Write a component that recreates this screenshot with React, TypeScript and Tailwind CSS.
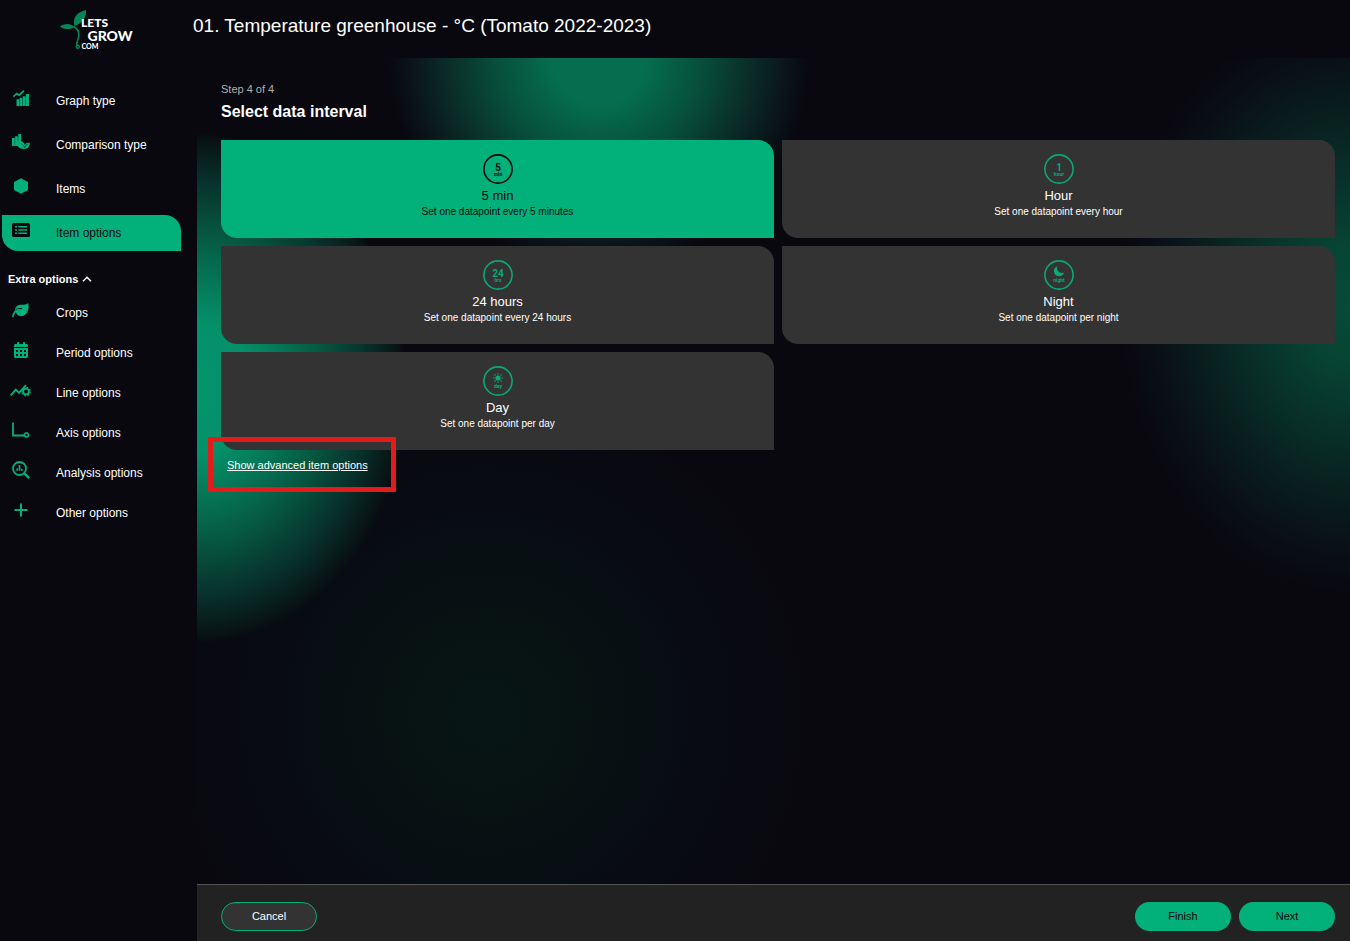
import type { ReactNode } from "react";
import { FaCalendarAlt } from "react-icons/fa";

type IconProps = { className?: string };

function GraphIcon() {
  return (
    <svg viewBox="0 0 16 16" className="h-4 w-4" fill="currentColor">
      <path d="M3.500 9.200h2.700V16H3.500zM6.600 7.700h2.700V16H6.600zM9.700 6.200h2.700V16H9.700zM12.800 4H16v12h-3.200z" />
      <path d="M.4 6.700 3.700 3.500l2.400 1.700L11 .7" fill="none" stroke="currentColor" strokeWidth="1.700" />
    </svg>
  );
}

function ComparisonIcon() {
  return (
    <svg viewBox="0 0 18 16" className="h-4 w-[18px]" fill="currentColor">
      <path d="M0 4h2.800v8H0zM3.100 2.200h2.700V12H3.100zM6.200 0H9v8H6.200z" />
      <path d="M4.200 7.200c4.300-.8 8 .2 8.600 3.600.7-1.800 2.200-2.400 5-2.100 0 3.700-1.800 6.200-5.600 6.200-4.400.3-7.800-2.700-8-7.700z" />
      <path d="M12.600 13.800c.4-1.800 1.200-2.800 2.800-3.500" fill="none" stroke="#09080f" strokeWidth=".7" />
      <path d="M9 9.800c1.600.8 2.600 1.800 3.300 3.200" fill="none" stroke="#09080f" strokeWidth=".4" />
    </svg>
  );
}

function HexagonIcon() {
  return (
    <svg viewBox="0 0 14 16" className="h-4 w-3.5" fill="currentColor">
      <path d="M7 .3 14 4v8l-7 3.700L0 12V4z" />
    </svg>
  );
}

function ListIcon() {
  return (
    <svg viewBox="0 0 18 14" className="h-3.5 w-[18px]">
      <rect width="18" height="14" rx="1.600" fill="currentColor" />
      <path
        d="M3 3.700h2M6.300 3.700h8.700M3 7h2M6.300 7h8.700M3 10.300h2M6.300 10.300h8.700"
        stroke="#02b07a"
        strokeWidth="1.500"
      />
    </svg>
  );
}

function LeafIcon() {
  return (
    <svg viewBox="0 0 17 15" className="h-[15px] w-[17px]" fill="currentColor">
      <path d="M3 7.200C3.200 3.600 6 1.800 9.500 1.800c3 0 4.900-.1 6.600-1.800C17.500 5.500 15.800 11 11.500 12.700c-2.800 1.100-5.800.2-7-2z" />
      <path d="M3.500 6.900C5 5.800 7 5.500 10 5.500" fill="none" stroke="#09080f" strokeWidth="1" />
      <path d="M.8 14.200C1.200 10 3.600 7.400 7 6.900" fill="none" stroke="currentColor" strokeWidth="1.600" />
    </svg>
  );
}

function LineGearIcon() {
  return (
    <svg viewBox="0 0 21 13" className="h-[13px] w-[21px]" fill="none" stroke="currentColor">
      <path d="M.8 11.400 5.800 5.600l3.200 3.200L16 1.200" strokeWidth="1.900" />
      <circle cx="16" cy="7.500" r="2.900" strokeWidth="1.900" />
      <circle cx="16" cy="7.500" r="4.200" strokeWidth="1.300" strokeDasharray="1.650 1.650" />
    </svg>
  );
}

function AxisIcon() {
  return (
    <svg viewBox="0 0 18 16" className="h-4 w-[18px]" fill="none" stroke="currentColor">
      <path d="M1 .5v13h11" strokeWidth="1.800" />
      <circle cx="14.500" cy="13" r="1.900" strokeWidth="1.500" />
      <circle cx="14.500" cy="13" r="2.700" strokeWidth=".8" strokeDasharray="1.060 1.060" />
    </svg>
  );
}

function AnalysisIcon() {
  return (
    <svg viewBox="0 0 18 18" className="h-[18px] w-[18px]" fill="none" stroke="currentColor">
      <circle cx="7.500" cy="7.500" r="6.500" strokeWidth="1.800" />
      <path d="m12.300 12.300 4.800 4.800" strokeWidth="2.400" />
      <path d="M5.200 9.800V7.300M7.500 9.800V4M9.800 9.800V7.800" strokeWidth="1.700" />
    </svg>
  );
}

function PlusIcon() {
  return (
    <svg viewBox="0 0 14 14" className="h-3.5 w-3.5" stroke="currentColor" strokeWidth="2">
      <path d="M7 .5v13M.5 7h13" />
    </svg>
  );
}

function Logo({ className }: IconProps) {
  return (
    <svg viewBox="0 0 76 42" className={className} role="img" aria-label="LetsGrow.com">
      <g fill="#058456">
        <path d="M15.500 16C13 8 18 2 27 0 27.500 7 24 13 15.500 16z" />
        <path d="M1 16.500c4-3.600 11-3.600 14.500.8-4 2.700-11 2.300-14.500-.8z" />
      </g>
      <path
        d="M14.500 16.500c5 2.500 6 6.500 5 11-1 3.500-2.300 6-1.800 8.500"
        fill="none"
        stroke="#058456"
        strokeWidth="1.600"
      />
      <circle cx="18.800" cy="36.800" r="1.500" fill="none" stroke="#058456" strokeWidth="1.500" />
      <g fill="#fff" className="font-['Lato',sans-serif] font-black">
        <text x="22" y="17" fontSize="12">LETS</text>
        <text x="28.500" y="30.500" fontSize="14">GROW</text>
        <text x="22.500" y="38.500" fontSize="7">COM</text>
      </g>
    </svg>
  );
}

function Dial({ value, unit, children }: { value?: string; unit: string; children?: ReactNode }) {
  return (
    <svg viewBox="0 0 30 30" className="h-[30px] w-[30px]" fill="currentColor">
      <circle cx="15" cy="15" r="14.100" fill="none" stroke="currentColor" strokeWidth="1.600" />
      {children}
      <g textAnchor="middle" className="font-['Roboto','Liberation_Sans',sans-serif] font-bold">
        {value && <text x="15" y="17" fontSize="10">{value}</text>}
        <text x="15" y="22" fontSize="5">{unit}</text>
      </g>
    </svg>
  );
}

const steps = [
  { label: "Graph type", icon: <GraphIcon /> },
  { label: "Comparison type", icon: <ComparisonIcon /> },
  { label: "Items", icon: <HexagonIcon /> },
  { label: "Item options", icon: <ListIcon />, active: true },
];

const extras = [
  { label: "Crops", icon: <LeafIcon /> },
  { label: "Period options", icon: <FaCalendarAlt className="h-4 w-4" /> },
  { label: "Line options", icon: <LineGearIcon /> },
  { label: "Axis options", icon: <AxisIcon /> },
  { label: "Analysis options", icon: <AnalysisIcon /> },
  { label: "Other options", icon: <PlusIcon /> },
];

const intervals = [
  { title: "5 min", text: "Set one datapoint every 5 minutes", dial: <Dial value="5" unit="min" />, selected: true },
  { title: "Hour", text: "Set one datapoint every hour", dial: <Dial value="1" unit="hour" /> },
  { title: "24 hours", text: "Set one datapoint every 24 hours", dial: <Dial value="24" unit="hrs" /> },
  {
    title: "Night",
    text: "Set one datapoint per night",
    dial: (
      <Dial unit="night">
        <path d="M13.200 6.200a5.200 5.200 0 1 0 6.900 6.200c-3.400 1.800-8-1.200-6.900-6.200z" />
      </Dial>
    ),
  },
  {
    title: "Day",
    text: "Set one datapoint per day",
    dial: (
      <Dial unit="day">
        <circle cx="15" cy="12" r="2.600" />
        <path
          d="M15 7v1.500M15 15.500V17M10 12h1.500M18.500 12H20M11.500 8.500l1 1M17.500 14.500l1 1M18.500 8.500l-1 1M12.500 14.500l-1 1"
          stroke="currentColor"
          strokeWidth="1.100"
        />
      </Dial>
    ),
  },
];

const glow =
  "bg-[radial-gradient(ellipse_210px_210px_at_402px_0px,#056e4e_0%,#056e4e_22%,#07503c_48%,#0a3029_70%,#0a151a_89%,transparent_100%),radial-gradient(ellipse_210px_255px_at_0px_330px,#04936a_0%,#04916a_25%,#057a58_40%,#06553f_62%,#08302a_82%,#081314_97%,transparent_100%),radial-gradient(ellipse_230px_290px_at_100%_245px,#074a37_0%,#074433_20%,#08322a_42%,#091f1e_65%,#090e15_88%,transparent_100%),radial-gradient(ellipse_320px_320px_at_290px_655px,#071615_0%,#071313_25%,#080c12_65%,transparent_100%)]";

function NavRow({ label, icon, active, tall }: { label: string; icon: ReactNode; active?: boolean; tall?: boolean }) {
  return (
    <a
      href="#"
      aria-current={active ? "step" : undefined}
      className={`flex h-9 items-center rounded-tr-2xl rounded-bl-2xl text-[12px] leading-4 ${
        active ? "bg-[#02b07a] text-[#09080f]" : "text-white"
      } ${tall ? "mb-2" : "mb-1"}`}
    >
      <span className={`flex w-[54px] justify-start pb-1.5 pl-2 ${active ? "text-[#09080f]" : "text-[#02b07a]"}`}>
        <span className="flex w-[21px] justify-center">{icon}</span>
      </span>
      {label}
    </a>
  );
}

export default function App() {
  return (
    <div className="flex min-h-screen flex-col bg-[#09080f] font-['Liberation_Sans',Arial,sans-serif] text-white">
      <header className="flex h-[58px] shrink-0 items-start">
        <div className="w-[193px] shrink-0 pt-2.5 pl-[59px]">
          <Logo className="h-[42px] w-[76px]" />
        </div>
        <h1 className="pt-3 text-[19px] leading-7">01. Temperature greenhouse - °C (Tomato 2022-2023)</h1>
      </header>
      <div className="flex grow">
        <nav className="w-[197px] shrink-0 pt-[25px] pr-4 pl-0.5" aria-label="Graph setup">
          {steps.map((s) => (
            <NavRow key={s.label} {...s} tall />
          ))}
          <button type="button" className="mt-5 mb-2 flex h-4 items-center gap-1 pl-1.5 text-[11px] leading-4 font-bold">
            Extra options
            <svg viewBox="0 0 10 6" className="h-1.5 w-2.5" fill="none" stroke="currentColor" strokeWidth="1.500">
              <path d="M1 5.200 5 1.200 9 5.200" />
            </svg>
          </button>
          {extras.map((s) => (
            <NavRow key={s.label} {...s} />
          ))}
        </nav>
        <div className="flex min-w-0 grow flex-col">
          <main className={`grow pt-[23px] pr-[15px] pl-6 ${glow}`}>
            <p className="mb-[3px] text-[11px] leading-4 text-[#b0b0b0]">Step 4 of 4</p>
            <h2 className="mb-4 text-[16px] leading-6 font-bold">Select data interval</h2>
            <div className="grid grid-cols-2 gap-2">
              {intervals.map((i) => (
                <button
                  key={i.title}
                  type="button"
                  aria-pressed={!!i.selected}
                  className={`flex h-[98px] flex-col items-center rounded-tr-2xl rounded-bl-2xl pt-3.5 ${
                    i.selected ? "bg-[#02b07a] text-[#09080f]" : "bg-[#333333] text-white"
                  }`}
                >
                  <span className={i.selected ? "text-[#09080f]" : "text-[#0aa976]"}>{i.dial}</span>
                  <span className="mt-1 text-[13px] leading-4">{i.title}</span>
                  <span className="text-[10px] leading-4">{i.text}</span>
                </button>
              ))}
            </div>
            <div className="relative flex pt-[7px] pl-1.5">
              <a href="#" className="text-[11px] leading-4 underline">
                Show advanced item options
              </a>
              <span className="pointer-events-none absolute -top-[13px] -left-[13px] h-[55px] w-[188px] border-[5px] border-[#e41b1b]" />
            </div>
          </main>
          <footer className="flex h-[57px] shrink-0 items-center gap-2 border-t border-[#555555] bg-[#222222] pt-1.5 pr-[15px] pl-6 text-[11px]">
            <button type="button" className="mr-auto h-[29px] w-24 rounded-full border border-[#02b07a] bg-[#333333] text-white">
              Cancel
            </button>
            <button type="button" className="h-[29px] w-24 rounded-full bg-[#02b07a] text-[#09080f]">
              Finish
            </button>
            <button type="button" className="h-[29px] w-24 rounded-full bg-[#02b07a] text-[#09080f]">
              Next
            </button>
          </footer>
        </div>
      </div>
    </div>
  );
}
